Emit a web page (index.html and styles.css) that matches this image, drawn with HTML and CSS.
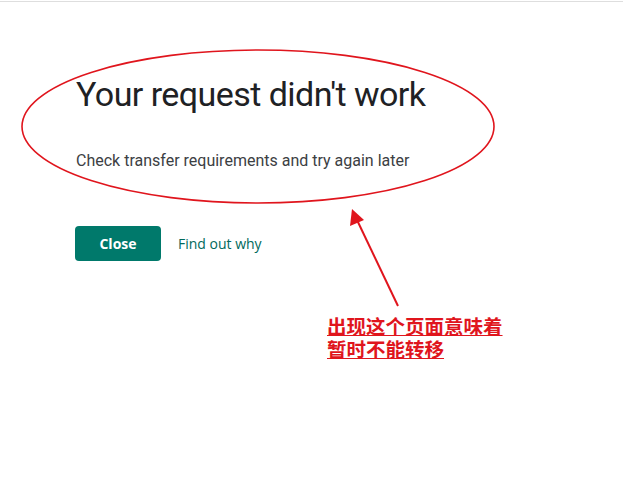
FILE: index.html
```html
<!DOCTYPE html>
<html>
<head>
<meta charset="utf-8">
<link rel="stylesheet" href="styles.css">
</head>
<body>
<div class="topline"></div>
<main class="content">
  <h1 class="title">Your request didn't work</h1>
  <p class="subtitle">Check transfer requirements and try again later</p>
  <div class="actions">
    <button class="btn-close">Close</button>
    <a class="link">Find out why</a>
  </div>
</main>
<svg class="annot" width="623" height="483" viewBox="0 0 623 483">
  <ellipse cx="258" cy="126.5" rx="236" ry="76.5" fill="none" stroke="#e0151d" stroke-width="1.6"/>
  <line x1="398" y1="306" x2="357" y2="220" stroke="#e0151d" stroke-width="2"/>
  <polygon points="352,209 350,226 364,220" fill="#e0151d"/>
</svg>
<div class="note">
  <div class="note-line">出现这个页面意味着</div>
  <div class="note-line">暂时不能转移</div>
</div>
</body>
</html>
```
FILE: styles.css
```css
html, body {
  margin: 0;
  padding: 0;
  background: #ffffff;
}
body {
  width: 623px;
  height: 483px;
  position: relative;
  overflow: hidden;
  font-family: Roboto, "Liberation Sans", sans-serif;
}
.topline {
  height: 1px;
  margin-top: 1px;
  background: #dedede;
}
.content {
  padding: 72px 0 0 76px;
}
.title {
  margin: 0;
  font-family: Roboto, "Open Sans", sans-serif;
  font-weight: 400;
  font-size: 34px;
  line-height: 40px;
  color: #202124;
  letter-spacing: -0.55px;
}
.subtitle {
  margin: 37px 0 0 0;
  font-size: 16px;
  line-height: 20px;
  color: #3c4043;
}
.actions {
  display: flex;
  align-items: center;
  gap: 17px;
  margin-top: 55px;
  margin-left: -1px;
}
.btn-close {
  width: 86px;
  height: 35px;
  border: none;
  border-radius: 4px;
  background: #00796b;
  color: #ffffff;
  font-family: "Open Sans", Roboto, sans-serif;
  font-weight: 700;
  font-size: 14px;
  padding: 0;
}
.link {
  color: #00695c;
  font-size: 14px;
  font-family: "Open Sans", Roboto, sans-serif;
}
.annot {
  position: absolute;
  left: 0;
  top: 0;
}
.note {
  position: absolute;
  left: 327px;
  top: 314px;
  font-family: "Noto Sans CJK SC", sans-serif;
  font-weight: 700;
  font-size: 19.5px;
  line-height: 23px;
  color: #e0151d;
}
.note-line {
  display: table;
  text-decoration: underline;
  text-underline-offset: 1px;
}
```
